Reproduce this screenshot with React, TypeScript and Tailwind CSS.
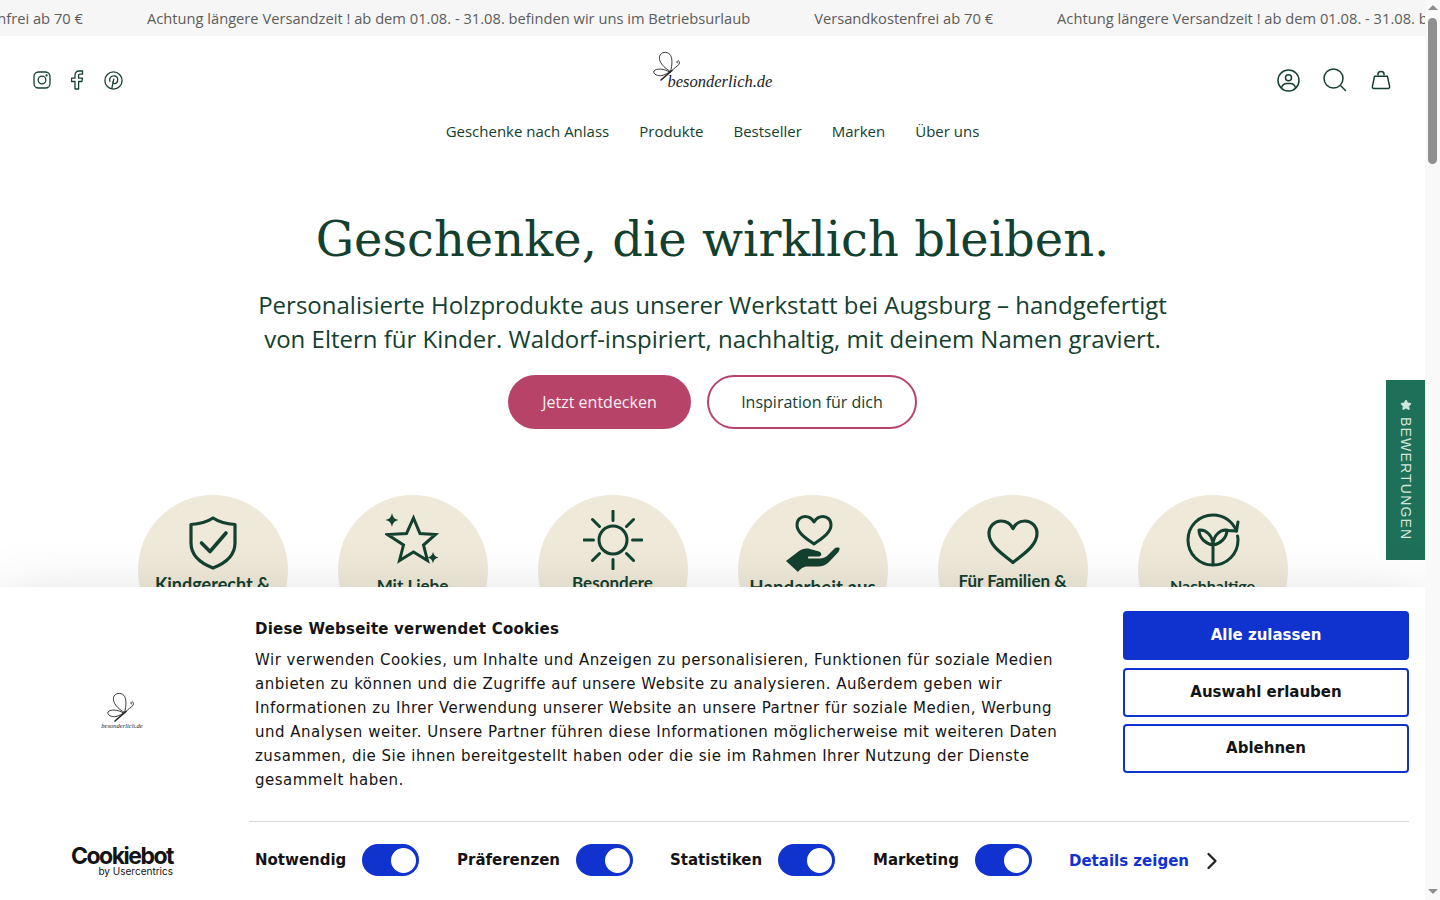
import { ChevronRight, Star } from "lucide-react";
import type { ReactNode } from "react";

const sans = "font-['Open_Sans','Noto_Sans',sans-serif]";
const dejavu = "font-['DejaVu_Sans',sans-serif]";

function InstagramIcon() {
  return (
    <svg width="18" height="18" viewBox="0 0 18 18" fill="none" stroke="currentColor" strokeWidth="1.3">
      <rect x="1" y="1" width="16" height="16" rx="4.5" />
      <circle cx="9" cy="9" r="3.8" />
      <circle cx="13.6" cy="4.4" r="0.5" fill="currentColor" />
    </svg>
  );
}

function FacebookIcon() {
  return (
    <svg width="13" height="20" viewBox="1 0 13 20" fill="none" stroke="currentColor" strokeWidth="1.3" strokeLinejoin="round">
      <path d="M5 19V11.5H1.5V8.2H5V5.2C5 2.6 6.6 1 9 1H12.5V4.2H10C9.1 4.2 8.6 4.7 8.6 5.6V8.2H12.5L11.9 11.5H8.6V19H5Z" />
    </svg>
  );
}

function PinterestIcon() {
  return (
    <svg width="19" height="19" viewBox="0 0 19 19" fill="none" stroke="currentColor" strokeWidth="1.3" strokeLinecap="round" strokeLinejoin="round">
      <circle cx="9.5" cy="9.5" r="8.6" />
      <path d="M7.8 17.4L9.8 8.2M5.9 10.4C4.8 7.4 7 4.8 9.8 4.8C12.3 4.8 13.9 6.5 13.7 8.9C13.500 11.2 12.2 12.6 10.5 12.6C9.5 12.6 8.8 12.1 8.6 11.2" />
    </svg>
  );
}

function AccountIcon() {
  return (
    <svg width="23" height="23" viewBox="0 0 23 23" fill="none" stroke="currentColor" strokeWidth="1.5">
      <circle cx="11.5" cy="11.5" r="10.5" />
      <circle cx="11.5" cy="8.8" r="3" />
      <path d="M4.4 19C5.4 15.9 7.4 14.6 9.5 14.6H13.500C15.6 14.6 17.6 15.9 18.6 19" />
    </svg>
  );
}

function SearchIcon() {
  return (
    <svg width="24" height="24" viewBox="0 0 24 24" fill="none" stroke="currentColor" strokeWidth="1.5" strokeLinecap="round">
      <circle cx="10.5" cy="10.5" r="9.5" />
      <path d="M18 18L22.5 22.5" />
    </svg>
  );
}

function BagIcon() {
  return (
    <svg className="ml-px" width="20" height="20" viewBox="0 0 20 20" fill="none" stroke="currentColor" strokeWidth="1.5" strokeLinejoin="round">
      <path d="M3.6 6.2H16.4L18.6 16.4C18.8 17.6 18 18.6 16.8 18.6H3.2C2 18.6 1.2 17.6 1.4 16.4L3.6 6.2Z" />
      <path d="M7 5.500V4C7 2.500 8 1.500 10 1.500C12 1.500 13 2.500 13 4V5.500" />
    </svg>
  );
}

function Butterfly({ size }: { size: number }) {
  return (
    <svg width={size} height={size} viewBox="0 0 30 30" fill="none" stroke="#222" strokeWidth="0.9" strokeLinecap="round">
      <path d="M17.5 20.5C11 17 5.5 11 6.5 5.5C7.5 1 14 0 17 3.5C19.5 6.5 19.5 14 17.5 20.5Z" />
      <path d="M16.5 21C11 17.5 3.5 17 1 20C-0.5 23 5 25.5 9 24.5C12 23.8 14.5 22.5 16.5 21Z" />
      <path d="M8 29L19 19.5" strokeWidth="1.6" />
      <path d="M19 19.5C21 17 24 15.5 25.8 13.6C27.4 11.8 26.2 9.2 24.6 10C23.4 10.6 23.8 12.4 25 12.2" />
    </svg>
  );
}

function ShieldIcon() {
  return (
    <svg width="48" height="54" viewBox="0 0 48 54" fill="none" stroke="currentColor" strokeWidth="3.2" strokeLinejoin="round" strokeLinecap="round">
      <path d="M24 2C30 6 37 8 46 8.500V27C46 39 37 47 24 52C11 47 2 39 2 27V8.500C11 8 18 6 24 2Z" />
      <path d="M12.500 27L21 35.500L37 17" strokeWidth="3.6" />
    </svg>
  );
}

function StarsIcon() {
  return (
    <svg width="56" height="54" viewBox="0 0 56 54" fill="none" stroke="currentColor" strokeWidth="3">
      <path d="M28.500 5L35 20.500L50.500 21.500L38.500 32L42.500 47.500L28.500 39L14.500 47.500L18.500 32L2.500 21.500L21.500 20.500Z" strokeLinejoin="miter" />
      <path d="M7 0C8 4 9 6 13.500 7C9 8 8 10 7 14C6 10 5 8 0.500 7C5 6 6 4 7 0Z" fill="currentColor" stroke="none" />
      <path d="M48 39C48.800 42 50 43.500 53.500 44.500C50 45.500 48.800 47 48 50.500C47.200 47 46 45.500 42.500 44.500C46 43.500 47.200 42 48 39Z" fill="currentColor" stroke="none" />
    </svg>
  );
}

function SunIcon() {
  return (
    <svg width="60" height="60" viewBox="0 0 60 60" fill="none" stroke="currentColor" strokeWidth="3" strokeLinecap="round">
      <circle cx="30" cy="30" r="14" />
      <path d="M30 1V10.500M30 49.500V59M1 30H10.500M49.500 30H59M9.500 9.500L16.500 16.500M43.500 43.500L50.500 50.500M50.500 9.500L43.500 16.500M16.500 43.500L9.500 50.500" />
    </svg>
  );
}

function HandHeartIcon() {
  return (
    <svg width="54" height="58" viewBox="0 0 54 58" fill="none">
      <path d="M28 29C21 24 11 18 11 10C11 4.500 15 1.500 19 1.500C23 1.500 26 3.500 28 7C30 3.500 33 1.500 37 1.500C41 1.500 45 4.500 45 10C45 18 35 24 28 29Z" stroke="currentColor" strokeWidth="3" strokeLinejoin="round" />
      <path d="M0 46L13 36C16 34 20 33 24 34L33 36.500C36 37.500 36 41 33 41.500L23 41.500C21.500 41.500 21.500 43.500 23 43.500H34C37 43.500 39 42.500 41 41L48 34C50 32 53 32.500 53.500 33C54 34.500 53 36 52 37.500L43 47C40 50 36 51.500 32 51.500H22C18 51.500 15 53 12 57L0 46Z" fill="currentColor" />
    </svg>
  );
}

function HeartIcon() {
  return (
    <svg width="52" height="46" viewBox="0 0 52 46" fill="none" stroke="currentColor" strokeWidth="3.2" strokeLinejoin="round">
      <path d="M26 43.500C17 36 2 27 2 14.500C2 7 8 2 14 2C19 2 23.500 4.500 26 9.500C28.500 4.500 33 2 38 2C44 2 50 7 50 14.500C50 27 35 36 26 43.500Z" />
    </svg>
  );
}

function SproutIcon() {
  return (
    <svg width="54" height="54" viewBox="0 0 54 54" fill="none" stroke="currentColor" strokeWidth="3" strokeLinecap="round" strokeLinejoin="round">
      <path d="M50.500 18C46.500 8 37.500 2 27 2C13 2 2 13 2 27C2 41 13 52 27 52C41 52 52 41 52 27C52 25.500 52 24.500 51.500 23" />
      <path d="M41 17.500L50.500 18L52 9" />
      <path d="M27 51V30M27 32C20 31 13 25 13 17C20 16 27 23 27 32ZM27 32C34 31 41 25 41 17C34 16 27 23 27 32Z" />
    </svg>
  );
}

const badges: { label: string; cls: string; icon: ReactNode; iconMt: string }[] = [
  { label: "Kindgerecht &", cls: "mt-[3px] text-[18px]", icon: <ShieldIcon />, iconMt: "mt-[21px]" },
  { label: "Mit Liebe", cls: "mt-[8px] text-[17px]", icon: <StarsIcon />, iconMt: "mt-[18px]" },
  { label: "Besondere", cls: "mt-[2px] text-[17px]", icon: <SunIcon />, iconMt: "mt-[15px]" },
  { label: "Handarbeit aus", cls: "mt-[3px] text-[18.700px]", icon: <HandHeartIcon />, iconMt: "mt-[20px]" },
  { label: "Für Familien &", cls: "mt-[5px] text-[17px]", icon: <HeartIcon />, iconMt: "mt-[24px]" },
  { label: "Nachhaltige", cls: "mt-[8px] text-[16px]", icon: <SproutIcon />, iconMt: "mt-[18px]" },
];

function Toggle() {
  return (
    <span className="flex h-8 w-[57px] items-center justify-end rounded-full bg-[#1032cf] pr-[3px]">
      <span className="size-[25px] rounded-full bg-white" />
    </span>
  );
}

function Consent({ label, className }: { label: string; className: string }) {
  return (
    <div className={`flex items-center gap-4 ${className}`}>
      <span className="text-[15px] font-bold text-[#141414]">{label}</span>
      <Toggle />
    </div>
  );
}

function CookieDialog() {
  return (
    <div className={`absolute inset-x-0 bottom-0 h-[313px] bg-white pt-6 pr-4 text-[#141414] shadow-[0_32px_68px_rgba(0,0,0,0.3)] ${dejavu}`}>
      <div className="flex h-[210px]">
        <div className="flex w-[249px] shrink-0 flex-col items-center pt-[81px] pr-[5px]">
          <Butterfly size={30} />
          <span className="font-['Liberation_Serif',serif] text-[6.500px] italic leading-[8px] text-[#222]">besonderlich.de</span>
        </div>
        <div className="w-[874px] shrink-0 pt-2 pl-1.5">
          <h2 className="text-[15px] font-bold leading-[20px] tracking-[0.22px]">Diese Webseite verwendet Cookies</h2>
          <p className="mt-[9px] w-[815px] text-[15px] leading-[24px] tracking-[0.5px]">
            Wir verwenden Cookies, um Inhalte und Anzeigen zu personalisieren, Funktionen für soziale Medien anbieten zu können und die Zugriffe auf unsere Website zu analysieren. Außerdem geben wir Informationen zu Ihrer Verwendung unserer Website an unsere Partner für soziale Medien, Werbung und Analysen weiter. Unsere Partner führen diese Informationen möglicherweise mit weiteren Daten zusammen, die Sie ihnen bereitgestellt haben oder die sie im Rahmen Ihrer Nutzung der Dienste gesammelt haben.
          </p>
        </div>
        <div className="flex w-[286px] shrink-0 flex-col gap-2 text-[15px] font-bold">
          <button type="button" className="h-[49px] rounded bg-[#1032cf] text-white">Alle zulassen</button>
          <button type="button" className="h-[49px] rounded border-2 border-[#1032cf] bg-white">Auswahl erlauben</button>
          <button type="button" className="-mt-px h-[49px] rounded border-2 border-[#1032cf] bg-white">Ablehnen</button>
        </div>
      </div>
      <div className="flex">
        <div className="flex w-[249px] shrink-0 flex-col items-end pt-[25px] pr-[76px]">
          <span className="font-['Inter',sans-serif] text-[23px] font-bold leading-[20px] tracking-[-1.500px] text-[#141414]">Cookiebot</span>
          <span className="font-['Inter',sans-serif] text-[10px] leading-[11px] text-[#141414]">by Usercentrics</span>
        </div>
        <div className="flex-1 border-t border-[#d6d6d6] pt-[22px] pl-1.5">
          <div className="flex items-center">
            <Consent label="Notwendig" className="w-[202px]" />
            <Consent label="Präferenzen" className="w-[213px]" />
            <Consent label="Statistiken" className="w-[203px]" />
            <Consent label="Marketing" className="w-[196px]" />
            <span className="pt-0.5 text-[15px] font-bold text-[#1032cf]">Details zeigen</span>
            <ChevronRight className="mt-0.5 ml-[9px] size-7 text-[#222]" strokeWidth={2} aria-hidden />
          </div>
        </div>
      </div>
    </div>
  );
}

function Page() {
  return (
    <div className={`relative h-full w-[1425px] shrink-0 overflow-hidden bg-white text-[#14402f] ${sans}`}>
      <div className="flex h-9 items-center gap-16 overflow-hidden whitespace-nowrap bg-[#f6f6f6] text-[14.700px] text-[#5c5c5c]">
        <span className="-ml-[96px]">Versandkostenfrei ab 70 €</span>
        <span>Achtung längere Versandzeit ! ab dem 01.08. - 31.08. befinden wir uns im Betriebsurlaub</span>
        <span>Versandkostenfrei ab 70 €</span>
        <span>Achtung längere Versandzeit ! ab dem 01.08. - 31.08. befinden wir uns im Betriebsurlaub</span>
      </div>

      <header className="flex h-[73px] items-start justify-between px-[33px] pt-[15px]">
        <div className="flex w-[300px] items-center gap-[20px] pt-[19px]">
          <InstagramIcon />
          <FacebookIcon />
          <PinterestIcon />
        </div>
        <div className="flex w-[120px] flex-col items-start">
          <Butterfly size={30} />
          <span className="-mt-[10px] pl-[15px] font-['Liberation_Serif',serif] text-[16.500px] italic leading-[22px] text-[#222]">besonderlich.de</span>
        </div>
        <div className="flex w-[300px] items-center justify-end gap-[23px] pt-[17px] pr-[1px]">
          <AccountIcon />
          <SearchIcon />
          <BagIcon />
        </div>
      </header>

      <nav className="mt-[12px] flex items-center justify-center gap-[30px] text-[15px] leading-[20px]">
        <span>Geschenke nach Anlass</span>
        <span>Produkte</span>
        <span>Bestseller</span>
        <span>Marken</span>
        <span>Über uns</span>
      </nav>

      <section className="mt-[62px] flex flex-col items-center">
        <h1 className="font-['DejaVu_Serif',serif] text-[48px] leading-[72px]">Geschenke, die wirklich bleiben.</h1>
        <p className="mt-[13px] w-[930px] text-center text-[24px] leading-[34px]">
          Personalisierte Holzprodukte aus unserer Werkstatt bei Augsburg – handgefertigt von Eltern für Kinder. Waldorf-inspiriert, nachhaltig, mit deinem Namen graviert.
        </p>
        <div className="mt-[19px] flex gap-4 text-[16px]">
          <span className="flex h-[54px] w-[183px] items-center justify-center rounded-[27px] bg-[#b74468] text-[#fbeef2]">Jetzt entdecken</span>
          <span className="flex h-[54px] w-[210px] items-center justify-center rounded-[27px] border-2 border-[#b74468]">Inspiration für dich</span>
        </div>
      </section>

      <div className="mt-[66px] flex justify-center gap-[50px]">
        {badges.map((b) => (
          <div key={b.label} className="flex size-[150px] flex-col items-center rounded-full bg-[#efe9d9] text-[#14402f]">
            <div className={b.iconMt}>{b.icon}</div>
            <span className={`font-['Lato',sans-serif] font-bold leading-[22px] ${b.cls}`}>{b.label}</span>
          </div>
        ))}
      </div>

      <div className="absolute right-0 top-[380px] flex h-[180px] w-[39px] items-center justify-center bg-[#1e7058] text-[14px] tracking-[1.2px] text-[#d3e6dc] [writing-mode:vertical-rl]">
        <Star className="mb-[6px] size-3 fill-current" aria-hidden />
        <span className="font-['Liberation_Sans',sans-serif]">BEWERTUNGEN</span>
      </div>

      <CookieDialog />
    </div>
  );
}

function Scrollbar() {
  return (
    <div className="flex h-full w-[15px] flex-col items-center bg-[#f9f9f9]">
      <span className="mt-[5px] size-0 border-x-[5px] border-b-[5px] border-x-transparent border-b-[#8f8f8f]" />
      <span className="mt-[8px] h-[146px] w-[9px] rounded-full bg-[#8f8f8f]" />
      <span className="mt-auto mb-[6px] size-0 border-x-[5px] border-t-[5px] border-x-transparent border-t-[#8f8f8f]" />
    </div>
  );
}

export default function App() {
  return (
    <div className="flex h-screen w-full overflow-hidden">
      <Page />
      <Scrollbar />
    </div>
  );
}
